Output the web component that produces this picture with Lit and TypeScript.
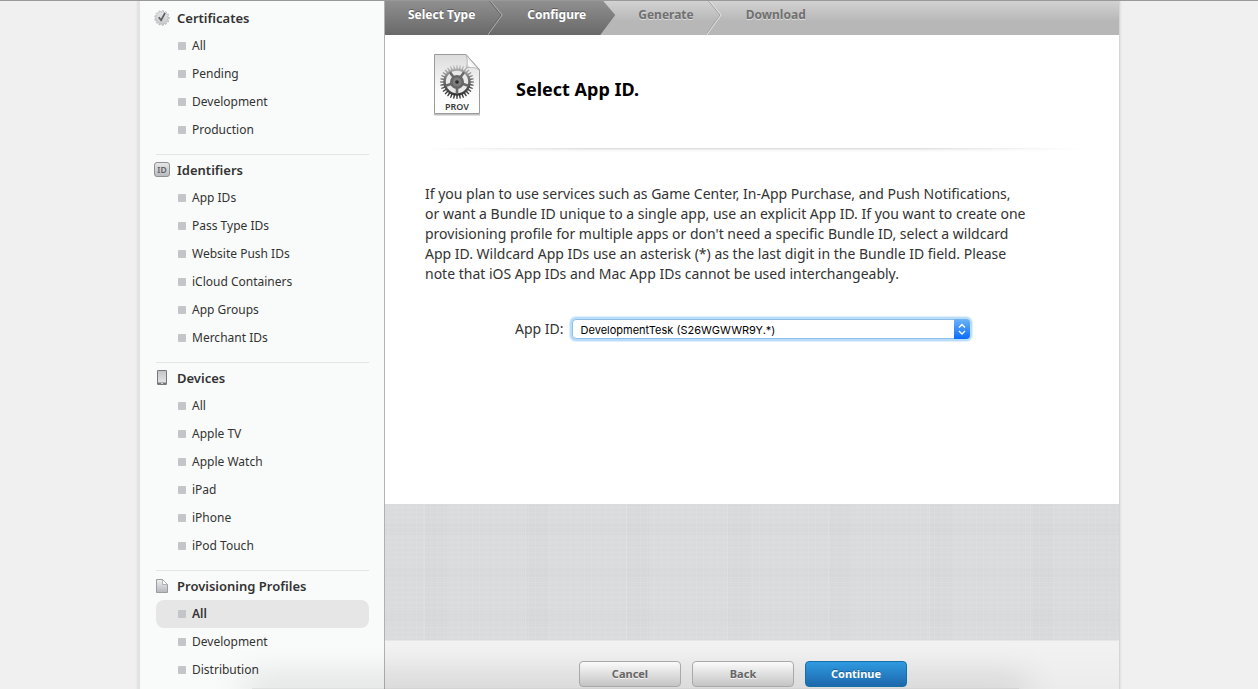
import { LitElement, html, css, svg } from "lit";
import { customElement, property } from "lit/decorators.js";
import { classMap } from "lit/directives/class-map.js";

type Group = { title: string; icon: string; items: string[]; selected?: string };

const GROUPS: Group[] = [
  { title: "Certificates", icon: "seal", items: ["All", "Pending", "Development", "Production"] },
  {
    title: "Identifiers",
    icon: "id",
    items: ["App IDs", "Pass Type IDs", "Website Push IDs", "iCloud Containers", "App Groups", "Merchant IDs"],
  },
  { title: "Devices", icon: "device", items: ["All", "Apple TV", "Apple Watch", "iPad", "iPhone", "iPod Touch"] },
  { title: "Provisioning Profiles", icon: "page", items: ["All", "Development", "Distribution"], selected: "All" },
];

const STEPS = ["Select Type", "Configure", "Generate", "Download"];

/* Outline of a toothed wheel, used by the seal and by the gear. */
function toothed(cx: number, cy: number, outer: number, inner: number, teeth: number): string {
  const pts: string[] = [];
  const step = (Math.PI * 2) / teeth;
  for (let i = 0; i < teeth; i++) {
    const a = i * step;
    for (const [f, r] of [[-0.3, inner], [-0.16, outer], [0.16, outer], [0.3, inner]]) {
      pts.push(`${(cx + r * Math.cos(a + f * step)).toFixed(2)} ${(cy + r * Math.sin(a + f * step)).toFixed(2)}`);
    }
  }
  return `M${pts.join("L")}Z`;
}

const ICONS: Record<string, unknown> = {
  seal: svg`
    <defs><linearGradient id="seal" x2="0" y2="1"><stop offset="0" stop-color="#e8e8ea"/><stop offset="1" stop-color="#c6c7ca"/></linearGradient></defs>
    <path d=${toothed(8, 8, 7.4, 6, 13)} fill="url(#seal)" stroke="#b0b1b4" stroke-width=".7"/>
    <path d="M4.800 7.200l2.300 3L11 3" fill="none" stroke="#5c5d61" stroke-width="1.600"/>`,
  id: svg`
    <defs><linearGradient id="badge" x2="0" y2="1"><stop offset="0" stop-color="#e8e8ea"/><stop offset="1" stop-color="#b8b9bc"/></linearGradient></defs>
    <rect x=".5" y=".5" width="15" height="14" rx="2.5" fill="url(#badge)" stroke="#8f9094"/>
    <text x="8" y="10.500" text-anchor="middle" font-size="8.500" font-weight="600" fill="#606165">ID</text>`,
  device: svg`
    <defs><linearGradient id="screen" x2="0" y2="1"><stop offset="0" stop-color="#c4c5c8"/><stop offset="1" stop-color="#e4e4e6"/></linearGradient></defs>
    <rect x="3" y="0" width="10" height="15" rx="1.2" fill="#77787c"/>
    <rect x="4" y="1" width="8" height="11.5" fill="url(#screen)"/>
    <rect x="7" y="13" width="2" height="1" fill="#d5d5d8"/>`,
  page: svg`
    <defs><linearGradient id="sheet" x2="0" y2="1"><stop offset="0" stop-color="#f0f0f2"/><stop offset="1" stop-color="#b6b7bb"/></linearGradient></defs>
    <path d="M2.5 1.5h6l5 5v8h-11z" fill="url(#sheet)" stroke="#9c9da1"/>
    <path d="M8.5 1.5v5h5z" fill="#fff" stroke="#a4a5a9" stroke-width=".8"/>`,
};

@customElement("side-nav")
class SideNav extends LitElement {
  static styles = css`
    :host { display: block; box-sizing: border-box; padding: 2px 15px 0 16px; }
    .group { padding: 0 0 10px; }
    .group + .group { border-top: 1px solid #e3e5e4; }
    .title {
      display: flex; align-items: center; gap: 7px; height: 29px; margin: 0; padding-bottom: 0;
      font-size: 13px; font-weight: 600; color: #333; box-sizing: border-box;
    }
    .icon { width: 16px; height: 16px; margin-left: -2px; flex: none; font-family: "Noto Sans", sans-serif; }
    .list { list-style: none; margin: 0; padding: 0; }
    .link {
      display: flex; align-items: center; gap: 6px; height: 27px; padding: 0 0 1px 22px;
      font-size: 12px; color: #333; text-decoration: none; border-radius: 8px;
    }
    .link::before { content: ""; width: 8px; height: 8px; border-radius: 1px; background: #c4c5c8; }
    .selected { background: #e6e6e6; font-weight: 600; }
  `;

  render() {
    return html`<nav aria-label="Sections">
      ${GROUPS.map(
        (g) => html`<section class="group">
          <h2 class="title"><svg class="icon" viewBox="0 0 16 16" aria-hidden="true">${ICONS[g.icon]}</svg>${g.title}</h2>
          <ul class="list">
            ${g.items.map(
              (i) => html`<li><a href="#" class=${classMap({ link: true, selected: g.selected === i })}>${i}</a></li>`
            )}
          </ul>
        </section>`
      )}
    </nav>`;
  }
}

@customElement("step-bar")
class StepBar extends LitElement {
  @property({ type: Number }) current = 0;

  static styles = css`
    :host { display: block; background: linear-gradient(#d2d2d2, #b7b7b7 60%); }
    .steps { display: flex; list-style: none; margin: 0; padding: 0; height: 34px; }
    .step {
      display: flex; align-items: flex-start; gap: 13px; padding-left: 23px; font-size: 12px; font-weight: 700;
      line-height: 28px; color: #707070; text-shadow: 0 1px 0 #dcdcdc;
    }
    .done {
      background: linear-gradient(#8f8f8f, #696969); color: #fff; text-shadow: 0 -1px 0 #5c5c5c;
    }
    .done + .done { margin-left: -1px; padding-left: 24px; }
    .current { clip-path: polygon(0 0, calc(100% - 12px) 0, 100% 14px, calc(100% - 15px) 100%, 0 100%); }
    .arrow { display: block; width: 16px; height: 34px; flex: none; }
  `;

  render() {
    return html`<ol class="steps">
      ${STEPS.map((s, i) => {
        const done = i <= this.current;
        const current = i === this.current;
        return html`<li class=${classMap({ step: true, done, current })} aria-current=${current ? "step" : "false"}>
          ${s}${i < STEPS.length - 1 ? this.arrow(done, current) : ""}
        </li>`;
      })}
    </ol>`;
  }

  private arrow(done: boolean, current: boolean) {
    return html`<svg class="arrow" viewBox="0 0 16 34" aria-hidden="true">
      ${current
        ? ""
        : svg`<path d="M1.500 0L13 14L-1.500 34" fill="none" stroke=${done ? "#666" : "#a2a2a2"} />
            <path d="M2.700 0L14.200 14L-.3 34" fill="none" stroke=${done ? "#b0b0b0" : "#e2e2e2"} />`}
    </svg>`;
  }
}

@customElement("profile-icon")
class ProfileIcon extends LitElement {
  static styles = css`
    :host { display: block; }
    .art { display: block; width: 48px; height: 64px; font-family: "Noto Sans", sans-serif; }
  `;

  render() {
    return html`<svg class="art" viewBox="0 0 48 64" aria-hidden="true">
      <defs>
        <linearGradient id="sheet" x2="0" y2="1"><stop offset="0" stop-color="#dcdcdc" /><stop offset=".6" stop-color="#fafafa" /><stop offset="1" stop-color="#fff" /></linearGradient>
        <linearGradient id="metal" x2="0" y2="1"><stop offset="0" stop-color="#c4c4c4" /><stop offset=".45" stop-color="#6c6c6c" /><stop offset="1" stop-color="#262626" /></linearGradient>
        <linearGradient id="curl" x1="0" y1="1" x2=".6" y2=".4"><stop offset="0" stop-color="#8c8c8c" /><stop offset=".5" stop-color="#fff" /><stop offset="1" stop-color="#e4e4e4" /></linearGradient>
      </defs>
      <path d="M1 61h46v1.500H1z" fill="#000" opacity=".25" />
      <path d="M1.500 1.500h31.500l13.500 15v44H1.500z" fill="url(#sheet)" stroke="#9b9b9b" />
      <path d="M33 1.500c1.500 4 1.800 8 .5 13.500c5-1.200 9.500-.6 13 2.500z" fill="url(#curl)" stroke="#a2a2a2" stroke-width=".7" />
      <path d=${toothed(24, 29, 17, 13.6, 32)} fill="url(#metal)" />
      <circle cx="24" cy="29" r="11.200" fill="#e9e9e9" />
      ${[18, 90, 162, 234, 306].map((a) => {
        const r = (a * Math.PI) / 180;
        return svg`<line x1="24" y1="29" x2=${(24 + 12 * Math.cos(r)).toFixed(2)} y2=${(29 + 12 * Math.sin(r)).toFixed(2)} stroke="#6a6a6a" stroke-width="2.600"/>`;
      })}
      <circle cx="24" cy="29" r="7" fill="#666" />
      <circle cx="24" cy="29" r="4.500" fill="#7d7d7d" />
      <circle cx="24" cy="29" r="1.800" fill="#2a2a2a" />
      <text x="24" y="56.500" text-anchor="middle" font-size="9" font-weight="600" fill="#3a3a3a">PROV</text>
    </svg>`;
  }
}

@customElement("app-root")
class AppRoot extends LitElement {
  static styles = css`
    :host {
      display: block; position: relative; height: 100vh; overflow: hidden; box-sizing: border-box;
      border-top: 1px solid #999; background: #f0f0f0; color: #333;
      font-family: "Noto Sans", "Open Sans", sans-serif;
    }
    .frame {
      display: flex; box-sizing: border-box; max-width: 982px; min-height: 100%; margin: 0 auto;
      border: solid #d6d6d6; border-width: 0 1px 0 2px; border-left-color: #e2e2e2;
      box-shadow: 0 0 3px rgba(0, 0, 0, 0.12);
    }
    .side { flex: none; width: 245px; background: #f9fbfa; border-right: 1px solid #b0b2b2; }
    .main { flex: 1; display: flex; flex-direction: column; min-width: 0; height: calc(100vh - 1px); }
    .panel { background: #fff; padding: 18px 38px 165px 40px; }
    .head { display: flex; align-items: center; gap: 35px; padding-left: 8px; }
    .heading { margin: 0; font-size: 18px; line-height: 28px; padding-bottom: 10px; padding-top: 18px; color: #000; }
    .rule {
      height: 4px; margin: 31px 0 32px; border: 0;
      background:
        linear-gradient(90deg, #fff, transparent 25%, transparent 75%, #fff),
        linear-gradient(#d6d6d6, #f0f0f0 40%, #fff);
    }
    .copy { margin: 0; font-size: 14px; line-height: 20px; }
    .field { display: flex; align-items: center; gap: 8px; margin-top: 35px; padding-left: 90px; }
    .label { font-size: 14px; line-height: 20px; }
    .picker { position: relative; flex: 0 1 398px; }
    .select {
      display: block; appearance: none; width: 100%; height: 20px; margin: 0; padding: 1px 24px 0 8px; border: 1px solid #8fbfe8;
      border-radius: 4px; background: #fff; color: #000; font: 11px Inter, sans-serif; outline: 0;
      box-shadow: 0 0 0 2px #b9dcfa, 0 0 1px 3px #dceefc;
    }
    .cap {
      position: absolute; top: 0; right: 0; width: 16px; height: 20px; border-radius: 0 4px 4px 0;
      background: linear-gradient(#6cb3fa, #0a6cf8); pointer-events: none;
    }
    .weave {
      flex: 1; background-color: #dadbdd;
      background-image:
        repeating-linear-gradient(90deg, transparent 0 3px, rgba(255, 255, 255, 0.06) 3px 4px, transparent 4px 7px),
        repeating-linear-gradient(0deg, transparent 0 2px, rgba(255, 255, 255, 0.07) 2px 3px, transparent 3px 5px),
        repeating-linear-gradient(90deg, transparent 0 39px, rgba(255, 255, 255, 0.1) 39px 40px, rgba(0, 0, 0, 0.008) 40px 62px, transparent 62px 101px),
        repeating-linear-gradient(0deg, transparent 0 17px, rgba(0, 0, 0, 0.008) 17px 29px, transparent 29px 44px);
    }
    .foot {
      display: flex; justify-content: center; gap: 11px; padding: 20px 18px 2px 0; border-top: 1px solid #e6e6e6;
      background: linear-gradient(#f2f2f2, #ececec);
    }
    .button {
      position: relative; z-index: 1; width: 102px; height: 26px; padding: 0 0 2px; border: 1px solid #a9a9a9; border-radius: 4px;
      background: linear-gradient(#fbfbfb, #c4c4c4); font: 700 11px "Noto Sans", sans-serif; color: #666;
      text-shadow: 0 1px 0 #f4f4f4;
    }
    .primary { border-color: #1570a8; background: linear-gradient(#2f9ae0, #1d68ac); color: #fff; text-shadow: 0 -1px 0 #1c5f96; }
    .shade {
      position: absolute; left: 20%; right: 19%; bottom: -1px; height: 2px; pointer-events: none;
      background: rgba(0, 0, 0, 0.1); box-shadow: 0 0 34px 8px rgba(0, 0, 0, 0.17);
    }
  `;

  render() {
    return html`
      <div class="frame">
        <side-nav class="side"></side-nav>
        <main class="main">
          <step-bar current="1"></step-bar>
          <section class="panel">
            <header class="head">
              <profile-icon></profile-icon>
              <h1 class="heading">Select App ID.</h1>
            </header>
            <hr class="rule" />
            <p class="copy">
              If you plan to use services such as Game Center, In-App Purchase, and Push Notifications,<br />
              or want a Bundle ID unique to a single app, use an explicit App ID. If you want to create one<br />
              provisioning profile for multiple apps or don't need a specific Bundle ID, select a wildcard<br />
              App ID. Wildcard App IDs use an asterisk (*) as the last digit in the Bundle ID field. Please<br />
              note that iOS App IDs and Mac App IDs cannot be used interchangeably.
            </p>
            <div class="field">
              <label class="label" for="app-id">App ID:</label>
              <span class="picker">
                <select class="select" id="app-id">
                  <option>DevelopmentTesk (S26WGWWR9Y.*)</option>
                </select>
                <svg class="cap" viewBox="0 0 16 20" aria-hidden="true">
                  <path d="M5 8.500l3-3 3 3M5 12l3 3 3-3" fill="none" stroke="#fff" stroke-width="1.400" />
                </svg>
              </span>
            </div>
          </section>
          <div class="weave"></div>
          <footer class="foot">
            <button class="button" type="button">Cancel</button>
            <button class="button" type="button">Back</button>
            <button class="button primary" type="button">Continue</button>
          </footer>
        </main>
      </div>
      <div class="shade"></div>
    `;
  }
}
